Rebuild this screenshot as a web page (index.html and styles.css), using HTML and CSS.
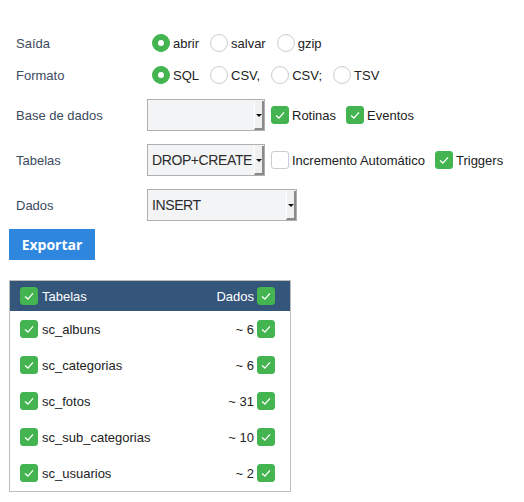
FILE: index.html
```html
<!DOCTYPE html>
<html>
<head>
<meta charset="utf-8">
<link rel="stylesheet" href="styles.css">
</head>
<body>
<div class="page">
  <div class="row r1">
    <div class="label">Saída</div>
    <div class="controls">
      <span class="opt"><span class="radio on"></span>abrir</span>
      <span class="opt"><span class="radio"></span>salvar</span>
      <span class="opt"><span class="radio"></span>gzip</span>
    </div>
  </div>
  <div class="row r2">
    <div class="label">Formato</div>
    <div class="controls">
      <span class="opt"><span class="radio on"></span>SQL</span>
      <span class="opt"><span class="radio"></span>CSV,</span>
      <span class="opt"><span class="radio"></span>CSV;</span>
      <span class="opt"><span class="radio"></span>TSV</span>
    </div>
  </div>
  <div class="row r3">
    <div class="label">Base de dados</div>
    <div class="controls">
      <div class="select"><span class="sel-text"></span><span class="sel-btn"></span></div>
      <span class="chk-opt"><span class="check on"><svg viewBox="0 0 18 18"><path d="M4.5 9.5 L7.8 12.5 L13.5 6"/></svg></span>Rotinas</span>
      <span class="chk-opt"><span class="check on"><svg viewBox="0 0 18 18"><path d="M4.5 9.5 L7.8 12.5 L13.5 6"/></svg></span>Eventos</span>
    </div>
  </div>
  <div class="row r4">
    <div class="label">Tabelas</div>
    <div class="controls">
      <div class="select"><span class="sel-text">DROP+CREATE</span><span class="sel-btn"></span></div>
      <span class="chk-opt"><span class="check"></span>Incremento Automático</span>
      <span class="chk-opt"><span class="check on"><svg viewBox="0 0 18 18"><path d="M4.5 9.5 L7.8 12.5 L13.5 6"/></svg></span>Triggers</span>
    </div>
  </div>
  <div class="row r5">
    <div class="label">Dados</div>
    <div class="controls">
      <div class="select wide"><span class="sel-text">INSERT</span><span class="sel-btn"></span></div>
    </div>
  </div>
  <button class="btn">Exportar</button>

  <div class="tbl">
    <div class="thead">
      <span class="cell-left"><span class="check on"><svg viewBox="0 0 18 18"><path d="M4.5 9.5 L7.8 12.5 L13.5 6"/></svg></span>Tabelas</span>
      <span class="cell-right">Dados<span class="check on"><svg viewBox="0 0 18 18"><path d="M4.5 9.5 L7.8 12.5 L13.5 6"/></svg></span></span>
    </div>
    <div class="trow">
      <span class="cell-left"><span class="check on"><svg viewBox="0 0 18 18"><path d="M4.5 9.5 L7.8 12.5 L13.5 6"/></svg></span>sc_albuns</span>
      <span class="cell-right">~ 6<span class="check on"><svg viewBox="0 0 18 18"><path d="M4.5 9.5 L7.8 12.5 L13.5 6"/></svg></span></span>
    </div>
    <div class="trow">
      <span class="cell-left"><span class="check on"><svg viewBox="0 0 18 18"><path d="M4.5 9.5 L7.8 12.5 L13.5 6"/></svg></span>sc_categorias</span>
      <span class="cell-right">~ 6<span class="check on"><svg viewBox="0 0 18 18"><path d="M4.5 9.5 L7.8 12.5 L13.5 6"/></svg></span></span>
    </div>
    <div class="trow">
      <span class="cell-left"><span class="check on"><svg viewBox="0 0 18 18"><path d="M4.5 9.5 L7.8 12.5 L13.5 6"/></svg></span>sc_fotos</span>
      <span class="cell-right">~ 31<span class="check on"><svg viewBox="0 0 18 18"><path d="M4.5 9.5 L7.8 12.5 L13.5 6"/></svg></span></span>
    </div>
    <div class="trow">
      <span class="cell-left"><span class="check on"><svg viewBox="0 0 18 18"><path d="M4.5 9.5 L7.8 12.5 L13.5 6"/></svg></span>sc_sub_categorias</span>
      <span class="cell-right">~ 10<span class="check on"><svg viewBox="0 0 18 18"><path d="M4.5 9.5 L7.8 12.5 L13.5 6"/></svg></span></span>
    </div>
    <div class="trow">
      <span class="cell-left"><span class="check on"><svg viewBox="0 0 18 18"><path d="M4.5 9.5 L7.8 12.5 L13.5 6"/></svg></span>sc_usuarios</span>
      <span class="cell-right">~ 2<span class="check on"><svg viewBox="0 0 18 18"><path d="M4.5 9.5 L7.8 12.5 L13.5 6"/></svg></span></span>
    </div>
  </div>
</div>
</body>
</html>
```

FILE: styles.css
```css
* { box-sizing: border-box; }
html, body { margin: 0; padding: 0; background: #fff; }
body {
  font-family: "Liberation Sans", Arial, sans-serif;
  font-size: 13px;
  color: #222;
}
.page {
  padding: 27px 0 0 9px;
}
.row {
  display: flex;
  align-items: center;
  height: 32px;
}
.r3 { margin-top: 8px; }
.r4 { margin-top: 13px; }
.r5 { margin-top: 13px; }
.label {
  width: 138px;
  padding-left: 7px;
  color: #3b4a5e;
  flex: none;
}
.controls {
  display: flex;
  align-items: center;
}
.opt {
  display: inline-flex;
  align-items: center;
  margin-left: 5px;
  margin-right: 6px;
}
.radio {
  width: 18px;
  height: 18px;
  border-radius: 50%;
  border: 1px solid #c9ccd1;
  background: #fff;
  margin-right: 3px;
  display: inline-flex;
  align-items: center;
  justify-content: center;
}
.radio.on {
  background: #43b450;
  border-color: #43b450;
}
.radio.on::after {
  content: "";
  width: 6px;
  height: 6px;
  border-radius: 50%;
  background: #fff;
}
.select {
  position: relative;
  width: 118px;
  height: 32px;
  border: 1px solid #afafaf;
  background: #f3f4f6;
  display: flex;
  align-items: center;
  padding-left: 4px;
  flex: none;
}
.select.wide { width: 150px; }
.sel-text {
  font-size: 14px;
  letter-spacing: -0.4px;
  color: #2b2b2b;
}
.sel-btn {
  position: absolute;
  top: 1px;
  right: 0;
  bottom: 0;
  width: 10px;
  background: #f0f0f0;
  border-left: 1px solid #fff;
  border-right: 2px solid #8a8a8a;
  border-bottom: 2px solid #8a8a8a;
}
.sel-btn::after {
  content: "";
  position: absolute;
  left: 1px;
  top: 13px;
  border-left: 3px solid transparent;
  border-right: 3px solid transparent;
  border-top: 3px solid #111;
}
.chk-opt {
  display: inline-flex;
  align-items: center;
  margin-left: 6px;
  margin-right: 4px;
}
.check {
  width: 18px;
  height: 18px;
  border-radius: 3px;
  border: 1px solid #c9ccd1;
  background: #fff;
  margin-right: 3px;
  display: inline-flex;
  flex: none;
}
.check.on {
  background: #43b450;
  border-color: #43b450;
}
.check svg {
  width: 16px;
  height: 16px;
}
.check svg path {
  fill: none;
  stroke: #fff;
  stroke-width: 1.5;
}
.btn {
  display: block;
  margin-top: 8px;
  width: 86px;
  height: 31px;
  border: 0;
  background: #2e86de;
  color: #fff;
  font-family: "Open Sans", sans-serif;
  font-weight: 700;
  font-size: 14px;
  padding: 0;
}
.tbl {
  margin-top: 20px;
  width: 282px;
  border: 1px solid #bdbdbd;
}
.thead, .trow {
  display: flex;
  align-items: center;
  justify-content: space-between;
  padding: 0 15px 0 10px;
}
.thead {
  height: 30px;
  background: #35567b;
  color: #fff;
}
.trow {
  height: 36px;
}
.cell-left, .cell-right {
  display: inline-flex;
  align-items: center;
}
.cell-left .check { margin-right: 4px; }
.cell-right .check { margin-right: 0; margin-left: 3px; }
```
